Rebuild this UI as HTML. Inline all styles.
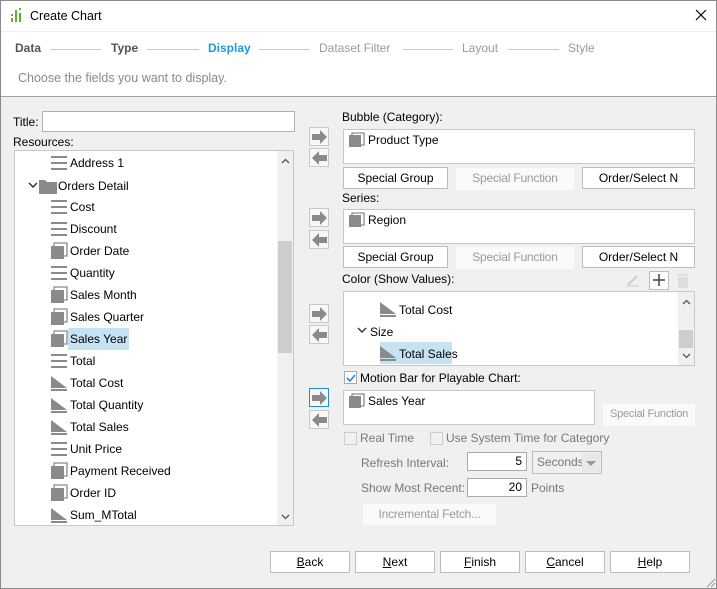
<!DOCTYPE html>
<html><head><style>
*{box-sizing:border-box;margin:0;padding:0}
body{width:717px;height:589px;overflow:hidden;font-family:"Liberation Sans",sans-serif;font-size:12px;color:#000;background:#f0f0f0;position:relative}
.a{position:absolute;white-space:nowrap}
.win{position:absolute;left:0;top:0;width:717px;height:589px;border:1px solid #8a8a8a}
.box{position:absolute;background:#fff;border:1px solid #c8c8c8}
.btn{position:absolute;background:#fff;border:1px solid #bdbdbd;text-align:center;line-height:20px;height:22px;white-space:nowrap}
.dis{position:absolute;background:#fafafa;color:#9a9a9a;text-align:center;line-height:20px;height:22px;white-space:nowrap;letter-spacing:-0.2px}
.ab{position:absolute;width:20px;height:19px;border:1px solid #c8c8c8;background:#f7f7f7}
.row{position:absolute;left:51px;width:200px;height:22px;line-height:22px;white-space:nowrap}
.row span{position:absolute;left:17px;top:0;padding:0 2px;white-space:nowrap}
.sel{background:#c5e3f3}
.gr{color:#777}
</style></head><body>
<div class="win"></div>
<div class="a" style="left:1px;top:1px;width:715px;height:96px;background:#fff;border-bottom:1px solid #a0a0a0"></div>
<div class="a" style="left:1px;top:31px;width:715px;height:1px;background:#f0f0f0"></div>
<svg class="a" style="left:10px;top:7px" width="14" height="17"><g fill="#5cb030"><rect x="1" y="7" width="2" height="2"/><rect x="1" y="11" width="2" height="4"/><rect x="5" y="3" width="2" height="12"/><rect x="9" y="1" width="2" height="2"/><rect x="9" y="6" width="2" height="9"/></g></svg>
<div class="a" style="left:30px;top:9px;font-size:12.5px">Create Chart</div>
<svg class="a" style="left:695px;top:9px" width="12" height="12"><path d="M1 1L11 11M11 1L1 11" stroke="#000" stroke-width="1.2"/></svg>
<div class="a" style="left:15px;top:41px;font-weight:bold;color:#555">Data</div>
<div class="a" style="left:50px;top:49px;width:51px;height:1px;background:#c8c8c8"></div>
<div class="a" style="left:111px;top:41px;font-weight:bold;color:#555">Type</div>
<div class="a" style="left:147px;top:49px;width:52px;height:1px;background:#c8c8c8"></div>
<div class="a" style="left:208px;top:41px;font-weight:bold;color:#1e9be0">Display</div>
<div class="a" style="left:259px;top:49px;width:51px;height:1px;background:#c8c8c8"></div>
<div class="a" style="left:319px;top:41px;color:#9a9a9a">Dataset Filter</div>
<div class="a" style="left:403px;top:49px;width:50px;height:1px;background:#c8c8c8"></div>
<div class="a" style="left:462px;top:41px;color:#9a9a9a">Layout</div>
<div class="a" style="left:508px;top:49px;width:51px;height:1px;background:#c8c8c8"></div>
<div class="a" style="left:568px;top:41px;color:#9a9a9a">Style</div>
<div class="a" style="left:18px;top:71px;color:#8a8a8a;font-size:12.5px">Choose the fields you want to display.</div>

<div class="a" style="left:13px;top:115px">Title:</div>
<div class="box" style="left:42px;top:111px;width:253px;height:21px;border-color:#b0b0b0"></div>
<div class="a" style="left:13px;top:135px">Resources:</div>
<div class="box" style="left:14px;top:150px;width:280px;height:376px;overflow:hidden">
 <div class="a" style="left:262px;top:0;width:16px;height:374px;background:#f0f0f0"></div>
 <div class="a" style="left:263px;top:90px;width:14px;height:112px;background:#cdcdcd"></div>
 <svg class="a" style="left:266px;top:7px" width="9" height="6"><path d="M1 5l3.5-3.5L8 5" fill="none" stroke="#555" stroke-width="1.3"/></svg>
 <svg class="a" style="left:266px;top:363px" width="9" height="6"><path d="M1 1l3.5 3.5L8 1" fill="none" stroke="#555" stroke-width="1.3"/></svg>
</div>
<svg class="a" style="left:14px;top:151px" width="262" height="374">
<defs>
<g id="ln"><rect x="0" y="-7" width="16" height="2" fill="#8a8a8a"/><rect x="0" y="-1" width="16" height="2" fill="#8a8a8a"/><rect x="0" y="5" width="16" height="2" fill="#8a8a8a"/></g>
<g id="dm"><rect x="0" y="-5" width="13" height="13" fill="#8a8a8a"/><path d="M3 -5V-8H16V5H13" fill="none" stroke="#8a8a8a" stroke-width="1.3"/></g>
<g id="ms"><path d="M0 -7L16 5H0Z" fill="#8a8a8a"/><rect x="0" y="6" width="16" height="2" fill="#8a8a8a"/></g>
</defs>
<use href="#ln" x="37" y="12"/>
<path d="M15 32l4 4 4-4" fill="none" stroke="#333" stroke-width="1.5"/>
<path d="M25 29h6l2 2h10v12H25Z" fill="#8a8a8a"/>
<use href="#ln" x="37" y="56"/><use href="#ln" x="37" y="78"/>
<use href="#dm" x="37" y="100"/><use href="#ln" x="37" y="122"/>
<use href="#dm" x="37" y="144"/><use href="#dm" x="37" y="166"/><use href="#dm" x="37" y="188"/>
<use href="#ln" x="37" y="210"/>
<use href="#ms" x="37" y="232"/><use href="#ms" x="37" y="254"/><use href="#ms" x="37" y="276"/>
<use href="#ln" x="37" y="298"/>
<use href="#dm" x="37" y="320"/><use href="#dm" x="37" y="342"/><use href="#ms" x="37" y="364"/>
</svg>
<div class="row" style="top:152px"><span>Address 1</span></div>
<div class="a" style="left:58px;top:179px">Orders Detail</div>
<div class="row" style="top:196px"><span>Cost</span></div>
<div class="row" style="top:218px"><span>Discount</span></div>
<div class="row" style="top:240px"><span>Order Date</span></div>
<div class="row" style="top:262px"><span>Quantity</span></div>
<div class="row" style="top:284px"><span>Sales Month</span></div>
<div class="row" style="top:306px"><span>Sales Quarter</span></div>
<div class="row" style="top:328px"><span class="sel">Sales Year</span></div>
<div class="row" style="top:350px"><span>Total</span></div>
<div class="row" style="top:372px"><span>Total Cost</span></div>
<div class="row" style="top:394px"><span>Total Quantity</span></div>
<div class="row" style="top:416px"><span>Total Sales</span></div>
<div class="row" style="top:438px"><span>Unit Price</span></div>
<div class="row" style="top:460px"><span>Payment Received</span></div>
<div class="row" style="top:482px"><span>Order ID</span></div>
<div class="row" style="top:504px"><span>Sum_MTotal</span></div>

<svg width="0" height="0" style="position:absolute"><defs>
<path id="ar" d="M2 6h8V2l7 7-7 7v-4H2Z" fill="#8a8a8a"/>
<path id="al" d="M17 6H9V2L2 9l7 7v-4h8Z" fill="#8a8a8a"/></defs></svg>
<div class="ab" style="left:309px;top:127px"><svg width="18" height="17"><use href="#ar"/></svg></div>
<div class="ab" style="left:309px;top:148px"><svg width="18" height="17"><use href="#al"/></svg></div>
<div class="ab" style="left:309px;top:208px"><svg width="18" height="17"><use href="#ar"/></svg></div>
<div class="ab" style="left:309px;top:230px"><svg width="18" height="17"><use href="#al"/></svg></div>
<div class="ab" style="left:309px;top:304px"><svg width="18" height="17"><use href="#ar"/></svg></div>
<div class="ab" style="left:309px;top:325px"><svg width="18" height="17"><use href="#al"/></svg></div>
<div class="ab" style="left:309px;top:388px;border-color:#1e8be0"><svg width="18" height="17"><use href="#ar"/></svg></div>
<div class="ab" style="left:309px;top:410px"><svg width="18" height="17"><use href="#al"/></svg></div>

<div class="a" style="left:342px;top:110px">Bubble (Category):</div>
<div class="box" style="left:343px;top:129px;width:352px;height:35px"></div>
<svg class="a" style="left:349px;top:132px" width="16" height="16"><rect x="0" y="3" width="12" height="12" fill="#8a8a8a"/><path d="M3 3V1H15V13H12" fill="none" stroke="#8a8a8a" stroke-width="1.3"/></svg>
<div class="a" style="left:368px;top:133px">Product Type</div>
<div class="btn" style="left:343px;top:167px;width:105px">Special Group</div>
<div class="dis" style="left:456px;top:168px;width:118px">Special Function</div>
<div class="btn" style="left:582px;top:167px;width:113px">Order/Select N</div>

<div class="a" style="left:342px;top:191px">Series:</div>
<div class="box" style="left:343px;top:209px;width:352px;height:35px"></div>
<svg class="a" style="left:349px;top:212px" width="16" height="16"><rect x="0" y="3" width="12" height="12" fill="#8a8a8a"/><path d="M3 3V1H15V13H12" fill="none" stroke="#8a8a8a" stroke-width="1.3"/></svg>
<div class="a" style="left:368px;top:213px">Region</div>
<div class="btn" style="left:343px;top:246px;width:105px">Special Group</div>
<div class="dis" style="left:456px;top:247px;width:118px">Special Function</div>
<div class="btn" style="left:582px;top:246px;width:113px">Order/Select N</div>

<div class="a" style="left:342px;top:272px">Color (Show Values):</div>
<svg class="a" style="left:626px;top:273px" width="14" height="14"><path d="M2 12L11 3" stroke="#ccc" stroke-width="2"/><path d="M1 13h12" stroke="#ccc"/></svg>
<div class="a" style="left:649px;top:271px;width:20px;height:19px;border:1px solid #bdbdbd;background:#fff"></div>
<svg class="a" style="left:652px;top:273px" width="14" height="14"><path d="M7 1v12M1 7h12" stroke="#444" stroke-width="1.5"/></svg>
<svg class="a" style="left:676px;top:273px" width="14" height="16"><path d="M1 2h12M3 5h8v9H3ZM5 6v7M7 6v7M9 6v7" stroke="#ccc" fill="none"/></svg>
<div class="box" style="left:343px;top:291px;width:352px;height:75px;overflow:hidden">
 <div class="a" style="left:334px;top:0;width:16px;height:73px;background:#f0f0f0"></div>
 <div class="a" style="left:335px;top:38px;width:14px;height:18px;background:#cdcdcd"></div>
 <svg class="a" style="left:338px;top:7px" width="9" height="6"><path d="M1 5l3.5-3.5L8 5" fill="none" stroke="#555" stroke-width="1.3"/></svg>
 <svg class="a" style="left:338px;top:61px" width="9" height="6"><path d="M1 1l3.5 3.5L8 1" fill="none" stroke="#555" stroke-width="1.3"/></svg>
 <div class="a sel" style="left:36px;top:50px;width:72px;height:22px"></div>
</div>
<svg class="a" style="left:380px;top:300px" width="20" height="62"><path d="M0 2L16 14H0Z" fill="#8a8a8a"/><rect x="0" y="15" width="16" height="2" fill="#8a8a8a"/><path d="M0 46L16 58H0Z" fill="#8a8a8a"/><rect x="0" y="59" width="16" height="2" fill="#8a8a8a"/></svg>
<div class="a" style="left:399px;top:303px">Total Cost</div>
<svg class="a" style="left:357px;top:327px" width="10" height="8"><path d="M1 1l4 4 4-4" fill="none" stroke="#333" stroke-width="1.4"/></svg>
<div class="a" style="left:370px;top:325px">Size</div>
<div class="a" style="left:399px;top:347px">Total Sales</div>

<div class="a" style="left:344px;top:371px;width:13px;height:13px;border:1px solid #aaa;background:#fff"></div>
<svg class="a" style="left:346px;top:373px" width="10" height="10"><path d="M1 5l3 3 5-6" fill="none" stroke="#1e8be0" stroke-width="1.6"/></svg>
<div class="a" style="left:360px;top:371px">Motion Bar for Playable Chart:</div>
<div class="box" style="left:343px;top:390px;width:252px;height:35px"></div>
<svg class="a" style="left:349px;top:393px" width="16" height="16"><rect x="0" y="3" width="12" height="12" fill="#8a8a8a"/><path d="M3 3V1H15V13H12" fill="none" stroke="#8a8a8a" stroke-width="1.3"/></svg>
<div class="a" style="left:368px;top:394px">Sales Year</div>
<div class="dis" style="left:603px;top:404px;width:92px;font-size:11px">Special Function</div>

<div class="a" style="left:344px;top:432px;width:13px;height:13px;border:1px solid #ccc;background:#f0f0f0"></div>
<div class="a gr" style="left:360px;top:431px">Real Time</div>
<div class="a" style="left:430px;top:432px;width:13px;height:13px;border:1px solid #ccc;background:#f0f0f0"></div>
<div class="a gr" style="left:446px;top:431px">Use System Time for Category</div>
<div class="a gr" style="left:361px;top:456px">Refresh Interval:</div>
<div class="box" style="left:467px;top:452px;width:60px;height:19px;border-color:#aaa;text-align:right;padding-right:4px;line-height:17px">5</div>
<div class="a" style="left:532px;top:451px;width:70px;height:23px;border:1px solid #bbb;background:#f0f0f0"></div>
<div class="a gr" style="left:537px;top:455px">Seconds</div>
<div class="a" style="left:582px;top:453px;width:18px;height:19px;background:#e8e8e8"></div>
<svg class="a" style="left:585px;top:460px" width="12" height="7"><path d="M1 1h10L6 6Z" fill="#999"/></svg>
<div class="a gr" style="left:361px;top:481px">Show Most Recent:</div>
<div class="box" style="left:467px;top:478px;width:60px;height:19px;border-color:#aaa;text-align:right;padding-right:4px;line-height:17px">20</div>
<div class="a gr" style="left:531px;top:481px">Points</div>
<div class="dis" style="left:363px;top:504px;width:133px;height:21px">Incremental Fetch...</div>

<div class="btn" style="left:270px;top:551px;width:80px"><u>B</u>ack</div>
<div class="btn" style="left:355px;top:551px;width:80px"><u>N</u>ext</div>
<div class="btn" style="left:440px;top:551px;width:80px"><u>F</u>inish</div>
<div class="btn" style="left:525px;top:551px;width:80px"><u>C</u>ancel</div>
<div class="btn" style="left:610px;top:551px;width:80px"><u>H</u>elp</div>
<svg class="a" style="left:704px;top:576px" width="12" height="12"><path d="M11 3L3 11M11 7L7 11" stroke="#999"/></svg>
</body></html>
